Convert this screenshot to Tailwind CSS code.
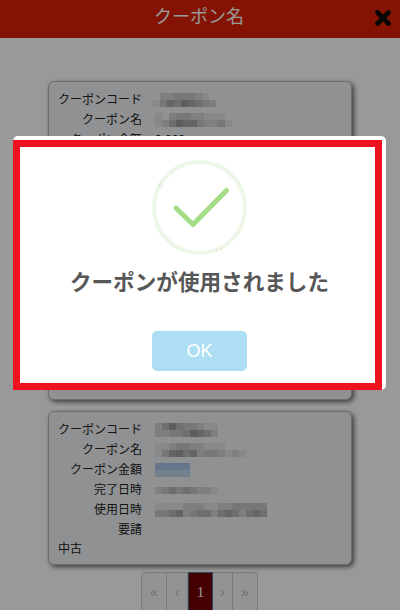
<!DOCTYPE html>
<html lang="ja">
<head>
  <meta charset="UTF-8" />
  <meta name="viewport" content="width=device-width, initial-scale=1.0" />
  <title>クーポン名</title>
  <script src="https://cdn.jsdelivr.net/npm/@tailwindcss/browser@4"></script>
</head>
<body class="relative w-[400px] h-[610px] overflow-hidden bg-white font-['Liberation_Sans','Noto_Sans_CJK_JP',sans-serif] text-[12px] text-[#222]">
  <header class="relative h-[38px] pr-[2px] bg-[#dc2008] text-white text-[18px] leading-[34px] text-center">
    クーポン名
    <svg class="absolute left-[375px] top-[10px]" width="16" height="16" viewBox="0 0 16 16">
      <path d="M2.5 2.5 L13.5 13.5 M13.5 2.5 L2.5 13.5" stroke="#0a0a0a" stroke-width="4.6" stroke-linecap="round" fill="none" />
    </svg>
  </header>

  <main class="flex flex-col items-center">
    <section class="w-[304px] h-[319px] mt-[43px] pt-[8px] pl-[9px] bg-[#f0f2f4] rounded-[6px] border border-[#b8b8b8] shadow-[2px_2px_5px_rgba(0,0,0,0.6)]">
      <div class="flex h-[20px] items-center"><span class="w-[84px] text-right whitespace-nowrap">クーポンコード</span><span class="blur ml-[11px]" data-px="7" data-rows="0223332100|1354654320"></span></div>
      <div class="flex h-[20px] items-center"><span class="w-[84px] text-right whitespace-nowrap">クーポン名</span><span class="blur ml-[13px]" data-px="7" data-rows="10233221110|12465532231"></span></div>
      <div class="flex h-[20px] items-center"><span class="w-[84px] text-right whitespace-nowrap">クーポン金額</span><span class="ml-[13px]">3,000</span></div>
    </section>

    <section class="w-[304px] h-[154px] mt-[11px] pt-[8px] pl-[9px] bg-[#f0f2f4] rounded-[6px] border border-[#b8b8b8] shadow-[2px_2px_5px_rgba(0,0,0,0.6)]">
      <div class="flex h-[20px] items-center"><span class="w-[84px] text-right whitespace-nowrap">クーポンコード</span><span class="blur ml-[13px]" data-px="7" data-rows="2464332110|2233465420"></span></div>
      <div class="flex h-[20px] items-center"><span class="w-[84px] text-right whitespace-nowrap">クーポン名</span><span class="blur ml-[13px]" data-px="7" data-rows="11233221110000|13564523321210"></span></div>
      <div class="flex h-[20px] items-center"><span class="w-[84px] text-right whitespace-nowrap">クーポン金額</span><span class="flex flex-col w-[35px] h-[14px] ml-[13px] blur-[0.5px]"><span class="h-[7px] bg-[#a9c4e6]"></span><span class="h-[7px] bg-[#c4d6ec]"></span></span></div>
      <div class="flex h-[20px] items-center"><span class="w-[84px] text-right whitespace-nowrap">完了日時</span><span class="blur ml-[13px]" data-px="7" data-rows="234343221"></span></div>
      <div class="flex h-[20px] items-center"><span class="w-[84px] text-right whitespace-nowrap">使用日時</span><span class="blur ml-[13px]" data-px="7" data-rows="1111222112233333|3345234424542454"></span></div>
      <div class="flex h-[20px] items-center"><span class="w-[84px] text-right whitespace-nowrap">要請</span></div>
      <div class="h-[18px] leading-[18px]">中古</div>
    </section>

    <nav class="flex h-[40px] mt-[7px] -ml-[1px] text-[#b8b8b8] text-[14px]">
      <span class="flex items-center justify-center w-[26px] bg-[#f5f5f5] border border-[#ccc] rounded-l-[4px]">«</span>
      <span class="flex items-center justify-center w-[21px] bg-[#f5f5f5] border-y border-r border-[#ccc]">‹</span>
      <span class="flex items-center justify-center w-[25px] bg-[#730004] border border-[#4a7599] text-white text-[15px] font-['Liberation_Serif','Noto_Sans_CJK_JP',serif]">1</span>
      <span class="flex items-center justify-center w-[20px] bg-[#f5f5f5] border-y border-r border-[#ccc]">›</span>
      <span class="flex items-center justify-center w-[25px] bg-[#f5f5f5] border-y border-r border-[#ccc] rounded-r-[4px]">»</span>
    </nav>
  </main>

  <!-- dim layer -->
  <div class="absolute inset-0 bg-black/40"></div>

  <!-- success dialog -->
  <div class="absolute left-[13px] top-[136px] w-[373px] h-[254px] bg-white rounded-[5px]">
    <div class="flex flex-col items-center w-[369px] h-[250px] mt-[4px] pl-[4px] border-[7px] border-[#ee1120]">
      <svg class="mt-[13px]" width="96" height="96" viewBox="0 0 96 96">
        <circle cx="47.5" cy="47.5" r="45.5" fill="none" stroke="#edf7e7" stroke-width="4" />
        <path d="M6.2 28 L8 24 M9 29 L10.8 25 M64 89 L66 92 M68 88 L70 91" stroke="#d5dccf" stroke-width="0.7" />
        <path d="M24 48 L41 64.5 L74.5 30.5" fill="none" stroke="#a5dc86" stroke-width="5" stroke-linecap="round" stroke-linejoin="round" />
      </svg>
      <h2 class="mt-[11px] text-[21.6px] leading-[32px] font-bold text-[#575757] whitespace-nowrap">クーポンが使用されました</h2>
      <button class="w-[95px] h-[40px] mt-[32px] bg-[#aedef4] rounded-[5px] text-white text-[18px]">OK</button>
    </div>
  </div>

  <script>
    // pixelated placeholders for the masked values
    document.querySelectorAll(".blur").forEach((el) => {
      const size = Number(el.dataset.px);
      el.className += " flex flex-col blur-[0.6px]";
      el.dataset.rows.split("|").forEach((row) => {
        const line = document.createElement("span");
        line.className = "flex";
        [...row].forEach((d) => {
          const cell = document.createElement("span");
          cell.className = "block";
          cell.style.width = size + "px";
          cell.style.height = size + "px";
          cell.style.backgroundColor = `rgba(0,0,0,${d * 0.06})`;
          line.appendChild(cell);
        });
        el.appendChild(line);
      });
    });
  </script>
</body>
</html>
